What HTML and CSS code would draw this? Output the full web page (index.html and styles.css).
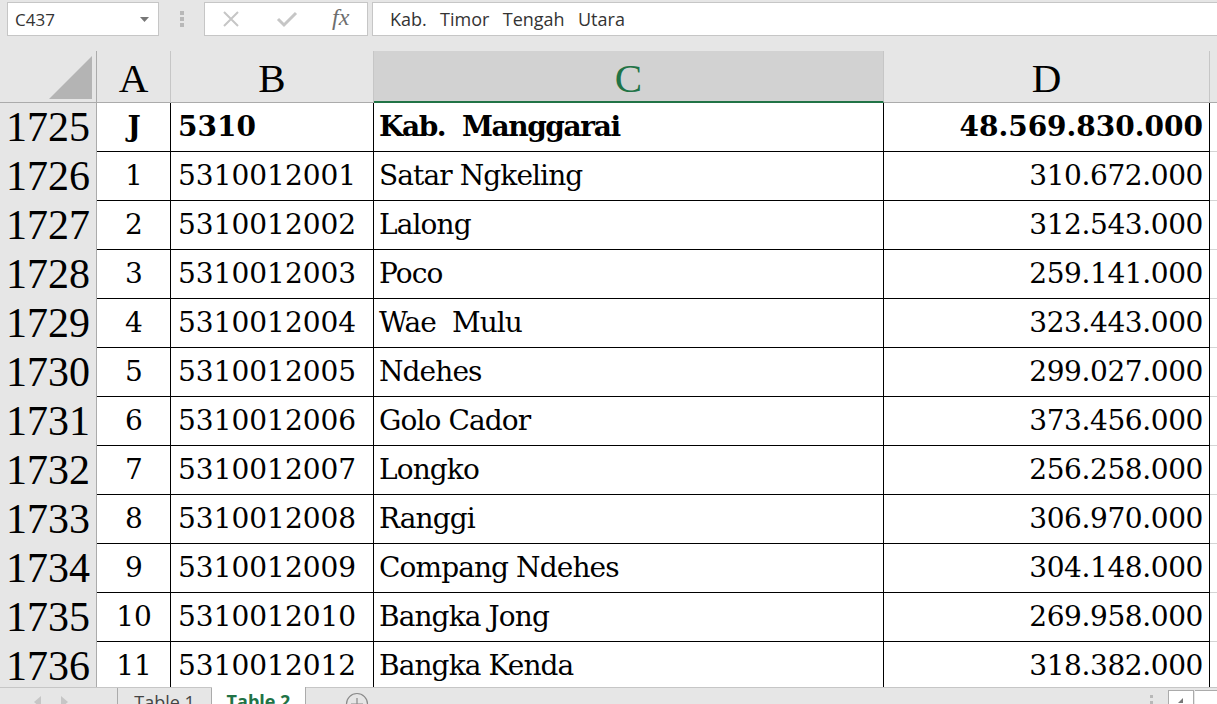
FILE: index.html
```html
<!DOCTYPE html>
<html>

<head>
    <meta charset="UTF-8">
    <meta name="viewport" content="width=device-width, initial-scale=1">
    <title>Table 2 - Excel</title>
    <link rel="stylesheet" href="styles.css">
</head>

<body>
    <!-- formula bar -->
    <div class="formulaBar">
        <div class="nameBox">
            <span>C437</span>
            <svg class="caret" width="9" height="5" viewBox="0 0 9 5"><path d="M0 0h9L4.5 5z" fill="#777" /></svg>
        </div>
        <div class="grip">
            <svg width="4" height="18" viewBox="0 0 4 18">
                <rect x="0" y="1" width="4" height="4" fill="#b8b8b8" />
                <rect x="0" y="7" width="4" height="4" fill="#b8b8b8" />
                <rect x="0" y="13" width="4" height="4" fill="#b8b8b8" />
            </svg>
        </div>
        <div class="fxBox">
            <svg class="fxIcon" width="18" height="18" viewBox="0 0 18 18">
                <path d="M2 2L16 16M16 2L2 16" stroke="#c6c6c6" stroke-width="2" fill="none" />
            </svg>
            <svg class="fxIcon" width="22" height="18" viewBox="0 0 22 18">
                <path d="M2 9L8 15L20 3" stroke="#c6c6c6" stroke-width="3" fill="none" />
            </svg>
            <span class="fxText">fx</span>
        </div>
        <div class="formulaInput">Kab.  Timor  Tengah  Utara</div>
    </div>

    <!-- grid -->
    <div class="sheet">
        <div class="corner"><span class="triangle"></span></div>
        <div class="colHead">A</div>
        <div class="colHead">B</div>
        <div class="colHead selectedCol">C</div>
        <div class="colHead">D</div>
        <div class="colHead colE"></div>

        <div class="rowHead">1725</div>
        <div class="cell center bold">J</div>
        <div class="cell bold">5310</div>
        <div class="cell name bold">Kab.  Manggarai</div>
        <div class="cell right bold">48.569.830.000</div>
        <div class="cell blank"></div>

        <div class="rowHead">1726</div>
        <div class="cell center">1</div>
        <div class="cell">5310012001</div>
        <div class="cell name">Satar Ngkeling</div>
        <div class="cell right">310.672.000</div>
        <div class="cell blank"></div>

        <div class="rowHead">1727</div>
        <div class="cell center">2</div>
        <div class="cell">5310012002</div>
        <div class="cell name">Lalong</div>
        <div class="cell right">312.543.000</div>
        <div class="cell blank"></div>

        <div class="rowHead">1728</div>
        <div class="cell center">3</div>
        <div class="cell">5310012003</div>
        <div class="cell name">Poco</div>
        <div class="cell right">259.141.000</div>
        <div class="cell blank"></div>

        <div class="rowHead">1729</div>
        <div class="cell center">4</div>
        <div class="cell">5310012004</div>
        <div class="cell name">Wae  Mulu</div>
        <div class="cell right">323.443.000</div>
        <div class="cell blank"></div>

        <div class="rowHead">1730</div>
        <div class="cell center">5</div>
        <div class="cell">5310012005</div>
        <div class="cell name">Ndehes</div>
        <div class="cell right">299.027.000</div>
        <div class="cell blank"></div>

        <div class="rowHead">1731</div>
        <div class="cell center">6</div>
        <div class="cell">5310012006</div>
        <div class="cell name">Golo Cador</div>
        <div class="cell right">373.456.000</div>
        <div class="cell blank"></div>

        <div class="rowHead">1732</div>
        <div class="cell center">7</div>
        <div class="cell">5310012007</div>
        <div class="cell name">Longko</div>
        <div class="cell right">256.258.000</div>
        <div class="cell blank"></div>

        <div class="rowHead">1733</div>
        <div class="cell center">8</div>
        <div class="cell">5310012008</div>
        <div class="cell name">Ranggi</div>
        <div class="cell right">306.970.000</div>
        <div class="cell blank"></div>

        <div class="rowHead">1734</div>
        <div class="cell center">9</div>
        <div class="cell">5310012009</div>
        <div class="cell name">Compang Ndehes</div>
        <div class="cell right">304.148.000</div>
        <div class="cell blank"></div>

        <div class="rowHead">1735</div>
        <div class="cell center">10</div>
        <div class="cell">5310012010</div>
        <div class="cell name">Bangka Jong</div>
        <div class="cell right">269.958.000</div>
        <div class="cell blank"></div>

        <div class="rowHead">1736</div>
        <div class="cell center">11</div>
        <div class="cell">5310012012</div>
        <div class="cell name">Bangka Kenda</div>
        <div class="cell right">318.382.000</div>
        <div class="cell blank"></div>
    </div>

    <!-- sheet tabs -->
    <div class="tabBar">
        <div class="tabNav">
            <svg width="8" height="12" viewBox="0 0 8 12"><path d="M7 0L0 6L7 12z" fill="#c6c6c6" /></svg>
            <svg width="8" height="12" viewBox="0 0 8 12"><path d="M1 0L8 6L1 12z" fill="#c6c6c6" /></svg>
        </div>
        <div class="tab">Table 1</div>
        <div class="tab activeTab">Table 2</div>
        <div class="addSheet">
            <svg width="24" height="24" viewBox="0 0 24 24">
                <circle cx="12" cy="12" r="10.5" stroke="#8a8a8a" stroke-width="1.2" fill="none" />
                <path d="M12 6v12M6 12h12" stroke="#8a8a8a" stroke-width="1.2" />
            </svg>
        </div>
        <div class="tabSpacer"></div>
        <div class="tabGrip">
            <svg width="4" height="16" viewBox="0 0 4 16">
                <rect x="0" y="1" width="3" height="3" fill="#b8b8b8" />
                <rect x="0" y="7" width="3" height="3" fill="#b8b8b8" />
            </svg>
        </div>
        <div class="hScroll">
            <div class="scrollBtn">
                <svg width="8" height="8" viewBox="0 0 8 8"><path d="M6 1L1 6H6z" fill="#777" /></svg>
            </div>
            <div class="scrollTrack"></div>
        </div>
    </div>
</body>

</html>
```

FILE: styles.css
```css
* {
    margin: 0;
    padding: 0;
    box-sizing: border-box;
}

/* Global styles */
body {
    width: 1217px;
    height: 704px;
    overflow: hidden;
    background-color: #e6e6e6;
    font-family: "Open Sans", "Noto Sans", sans-serif;
}

/* formula bar */
.formulaBar {
    height: 51px;
    display: flex;
    align-items: flex-start;
    padding-top: 2px;
    padding-left: 7px;
}

.nameBox {
    width: 152px;
    height: 34px;
    background-color: #ffffff;
    border: 1px solid #c6c6c6;
    display: flex;
    align-items: center;
    justify-content: space-between;
    padding: 0 9px 0 7px;
    font-size: 17px;
    color: #333;
}

.grip {
    width: 45px;
    height: 34px;
    display: flex;
    align-items: center;
    justify-content: center;
}

.fxBox {
    width: 164px;
    height: 34px;
    background-color: #ffffff;
    border: 1px solid #c6c6c6;
    display: flex;
    align-items: center;
    padding-left: 17px;
    gap: 36px;
}

.fxText {
    font-family: "Liberation Serif", serif;
    font-style: italic;
    font-size: 24px;
    color: #6e6e6e;
    margin-left: -2px;
    margin-top: -4px;
}

.formulaInput {
    flex: 1;
    height: 34px;
    margin-left: 4px;
    background-color: #ffffff;
    border: 1px solid #c6c6c6;
    border-right: none;
    padding-left: 17px;
    font-size: 18px;
    line-height: 32px;
    color: #333;
    white-space: pre;
    word-spacing: 2px;
}

/* sheet grid */
.sheet {
    height: 636px;
    overflow: hidden;
    display: grid;
    grid-template-columns: 97px 74px 203px 510px 326px 7px;
    grid-auto-rows: 49px;
    grid-template-rows: 52px;
    background-color: #ffffff;
}

.corner {
    background-color: #e6e6e6;
    border-right: 1px solid #ababab;
    border-bottom: 1px solid #ababab;
    position: relative;
}

.triangle {
    position: absolute;
    right: 4px;
    bottom: 3px;
    width: 0;
    height: 0;
    border-left: 43px solid transparent;
    border-bottom: 43px solid #b4b4b4;
}

.colHead {
    background-color: #e6e6e6;
    border-right: 1px solid #c6c6c6;
    border-bottom: 1px solid #ababab;
    display: flex;
    align-items: flex-end;
    justify-content: center;
    padding-bottom: 1px;
    font-family: "Liberation Serif", serif;
    font-size: 41px;
    line-height: 46px;
    color: #000;
}

.colE {
    border-right: none;
}

.selectedCol {
    background-color: #d2d2d2;
    color: #217346;
    border-bottom: 2px solid #217346;
    padding-bottom: 0;
}

.rowHead {
    background-color: #e6e6e6;
    border-right: 1px solid #ababab;
    display: flex;
    align-items: flex-end;
    justify-content: center;
    font-family: "Liberation Serif", serif;
    font-size: 42px;
    line-height: 48px;
    padding-bottom: 1px;
    color: #000;
}

.cell {
    border-right: 1px solid #000;
    border-bottom: 1px solid #000;
    display: flex;
    align-items: flex-end;
    padding: 0 6px 7px 7px;
    font-family: "DejaVu Serif", serif;
    font-size: 28px;
    line-height: 34px;
    color: #000;
    white-space: pre;
    overflow: hidden;
}

.name {
    padding-left: 5px;
    letter-spacing: -0.9px;
}

.name.bold {
    letter-spacing: -1.4px;
}

.center {
    justify-content: center;
}

.right {
    justify-content: flex-end;
    letter-spacing: -0.4px;
}

.right.bold {
    letter-spacing: 0;
}

.bold {
    font-weight: bold;
}

.blank {
    border-right: 1px solid #d4d4d4;
    border-bottom: 1px solid #d4d4d4;
}

/* sheet tabs */
.tabBar {
    height: 34px;
    display: flex;
    border-top: 1px solid #c6c6c6;
    background-color: #e6e6e6;
    font-size: 18px;
}

.tabNav {
    width: 118px;
    display: flex;
    gap: 18px;
    padding: 8px 0 0 34px;
    border-right: 1px solid #ababab;
}

.tab {
    width: 94px;
    text-align: center;
    color: #444;
    padding-top: 2px;
    border-right: 1px solid #ababab;
}

.activeTab {
    background-color: #ffffff;
    color: #217346;
    font-weight: bold;
    margin-top: -1px;
}

.addSheet {
    width: 100px;
    padding: 4px 0 0 39px;
}

.tabSpacer {
    flex: 1;
}

.tabGrip {
    width: 18px;
    padding-top: 3px;
}

.hScroll {
    width: 49px;
    display: flex;
    padding-top: 2px;
}

.scrollBtn {
    width: 26px;
    height: 30px;
    background-color: #ffffff;
    border: 1px solid #ababab;
    display: flex;
    justify-content: center;
    padding-top: 6px;
}

.scrollTrack {
    flex: 1;
    background-color: #ffffff;
    border-top: 1px solid #ababab;
    margin-left: 1px;
}
```
